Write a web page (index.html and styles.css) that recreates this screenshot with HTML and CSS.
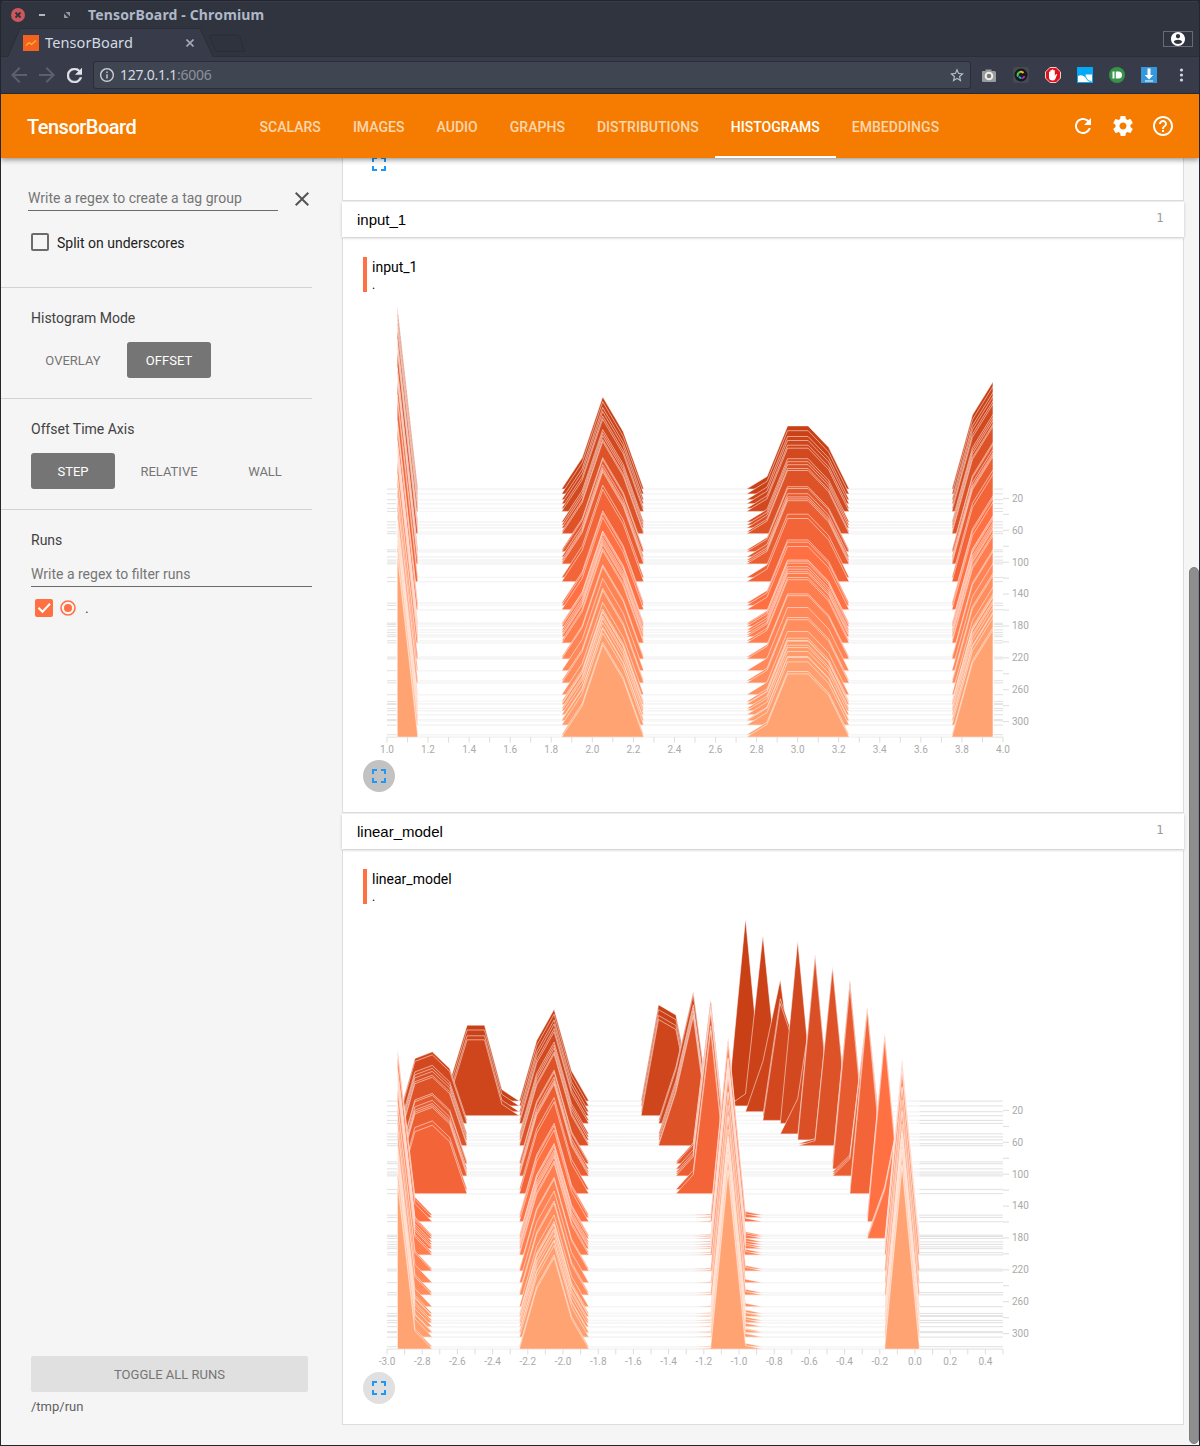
FILE: index.html
```html
<!DOCTYPE html>
<html lang="en">
<head>
<meta charset="utf-8">
<title>TensorBoard</title>
<link rel="stylesheet" href="styles.css">
</head>
<body>
<div class="window">
  <div class="titlebar">
    <svg class="win-buttons" width="62" height="16" viewBox="0 0 62 16">
      <circle cx="7" cy="8" r="7" fill="#cc575d"/>
      <path d="M4.500 5.500l5 5m0-5l-5 5" stroke="#2f343f" stroke-width="1.800"/>
      <path d="M28 8h6" stroke="#afb8c6" stroke-width="2"/>
      <path d="M54.500 5H59v4.500zM53 6.500V11h4.500z" fill="#8f97a5"/>
    </svg>
    <span class="win-title">TensorBoard - Chromium</span>
  </div>
  <div class="tabstrip">
    <svg class="tab-shape" width="250" height="29" viewBox="0 0 250 29">
      <path d="M0 28.500H7L19 .5H199L212 28.500H250V29H0z" fill="#383c4a"/>
      <path d="M0 28.500H7L19 .5H199L212 28.500H250" fill="none" stroke="#2b2e39"/>
      <path d="M210 7h26q2 0 3 2l4 13q1 1.500-1 1.500h-25q-2 0-3-2l-5-12q-1-2.500 1-2.500z" fill="#2f333e" stroke="#292d37"/>
    </svg>
    <div class="tab">
      <svg width="16" height="16" viewBox="0 0 16 16"><path d="M0 0h16v16H0z" fill="#f4631e"/><path d="M3 10.500l3-3 2.500 2 4.500-4" fill="none" stroke="#ffb23e" stroke-width="1.300"/></svg>
      <span class="tab-title">TensorBoard</span>
      <svg class="tab-close" width="8" height="8" viewBox="0 0 8 8"><path d="M.5.5l7 7m0-7l-7 7" stroke="#a4aab5" stroke-width="1.600"/></svg>
    </div>
    <div class="profile">
      <svg width="14" height="14" viewBox="2 2 20 20"><path fill="#fff" d="M12 2C6.480 2 2 6.480 2 12s4.480 10 10 10 10-4.480 10-10S17.520 2 12 2zm0 3c1.660 0 3 1.340 3 3s-1.340 3-3 3-3-1.340-3-3 1.340-3 3-3zm0 14.200c-2.500 0-4.710-1.280-6-3.220.03-1.990 4-3.080 6-3.080 1.990 0 5.970 1.090 6 3.080-1.290 1.940-3.500 3.220-6 3.220z"/></svg>
    </div>
  </div>
  <div class="toolbar">
    <svg class="nav-ico" width="16" height="16" viewBox="4 4 16 16"><path fill="#5b606e" d="M20 11H7.830l5.590-5.590L12 4l-8 8 8 8 1.410-1.410L7.830 13H20v-2z"/></svg>
    <svg class="nav-ico" width="16" height="16" viewBox="4 4 16 16"><path fill="#5b606e" d="M12 4l-1.410 1.410L16.170 11H4v2h12.170l-5.580 5.590L12 20l8-8z"/></svg>
    <svg class="nav-ico" width="15" height="15" viewBox="4 4 16 16"><path fill="#e3e5ea" stroke="#e3e5ea" stroke-width=".5" d="M17.650 6.350C16.200 4.900 14.210 4 12 4c-4.420 0-7.990 3.580-7.990 8s3.570 8 7.990 8c3.730 0 6.840-2.550 7.730-6h-2.080c-.82 2.330-3.040 4-5.650 4-3.310 0-6-2.690-6-6s2.690-6 6-6c1.660 0 3.140.69 4.220 1.780L13 11h7V4l-2.350 2.350z"/></svg>
    <div class="omnibox">
      <svg width="14" height="14" viewBox="2 2 20 20"><path fill="#c9cdd6" d="M11 17h2v-6h-2v6zm1-15C6.480 2 2 6.480 2 12s4.480 10 10 10 10-4.480 10-10S17.520 2 12 2zm0 18c-4.410 0-8-3.590-8-8s3.590-8 8-8 8 3.590 8 8-3.590 8-8 8zM11 9h2V7h-2v2z"/></svg>
      <span class="url">127.0.1.1<span class="port">:6006</span></span>
      <svg class="star" width="14" height="14" viewBox="2 2 20 19"><path fill="#b9bec9" d="M22 9.240l-7.190-.62L12 2 9.190 8.630 2 9.240l5.460 4.730L5.820 21 12 17.270 18.180 21l-1.630-7.030L22 9.240zM12 15.400l-3.760 2.270 1-4.280-3.320-2.880 4.380-.38L12 6.100l1.710 4.040 4.380.38-3.320 2.880 1 4.280L12 15.400z"/></svg>
    </div>
    <div class="extensions">
      <svg width="16" height="16" viewBox="0 0 16 16"><path fill="#999b9c" d="M1.500 4h3V2.500h6V4h3q1.500 0 1.500 1.500V14q0 1-1 1H2q-1 0-1-1V5q0-1 .5-1z"/><circle cx="8" cy="9" r="3.300" fill="#777" stroke="#eee" stroke-width="2"/></svg>
      <svg width="16" height="16" viewBox="0 0 16 16"><rect width="16" height="16" rx="3" fill="#464a52"/><circle cx="8" cy="8" r="6.500" fill="#17191d"/><path d="M5 9.500A3.200 3.200 0 0 1 7 5" fill="none" stroke="#4bc934" stroke-width="2"/><path d="M7 5a3.200 3.200 0 0 1 3.500 1" fill="none" stroke="#efba2e" stroke-width="2"/><path d="M11.500 9a3.500 3.500 0 0 1-2.500 2.500" fill="none" stroke="#c0308c" stroke-width="1.800"/><path d="M6 9.500q1 1.800 2.500 1.500" fill="none" stroke="#289bef" stroke-width="2"/></svg>
      <svg width="16" height="16" viewBox="0 0 16 16"><path d="M4.900.5h6.200l4.400 4.400v6.200l-4.400 4.400H4.900L.5 11.100V4.900z" fill="#e2121c" stroke="#eecccc"/><path d="M4 8V5q.8-1 1.300 0V3.500q.8-1 1.500 0V2.800q.8-.9 1.500 0v.7q.9-.8 1.500 0V9l1.200-2q1.200-.4 1 .7L10.300 12q-.6 1.500-2.500 1.500Q4 13.500 4 10z" fill="#fff"/></svg>
      <svg width="16" height="16" viewBox="0 0 16 16"><path d="M0 0h16v16H0z" fill="#03a9f4"/><path d="M1 9q3-1.500 5.500 0L8 10l.5-2.500H15V15H1z" fill="#fff"/><path d="M8.500 8.500q0 2 1.500 4t4.500 2" stroke="#03a9f4" fill="none"/></svg>
      <svg width="16" height="16" viewBox="0 0 16 16"><circle cx="8" cy="8" r="8" fill="#359447"/><path d="M3.500 4.500h2v7h-2zM6.800 4.500h2.700a3.500 3.500 0 0 1 0 7H6.800z" fill="#fff"/></svg>
      <svg width="16" height="16" viewBox="0 0 16 16"><path d="M0 0h16v16H0z" fill="#3498db"/><path d="M6.500 1.500h3V8h2.800L8 12.500 3.700 8h2.800zM4 13.500h8v1H4z" fill="#fff"/></svg>
      <svg width="16" height="16" viewBox="0 0 16 16"><g fill="#d3d7df"><circle cx="8.500" cy="3" r="1.600"/><circle cx="8.500" cy="8" r="1.600"/><circle cx="8.500" cy="13" r="1.600"/></g></svg>
    </div>
  </div>

  <header class="appbar">
    <h1>TensorBoard</h1>
    <nav>
      <a>SCALARS</a><a>IMAGES</a><a>AUDIO</a><a>GRAPHS</a><a>DISTRIBUTIONS</a><a class="active">HISTOGRAMS</a><a>EMBEDDINGS</a>
    </nav>
    <div class="actions">
      <svg width="24" height="24" viewBox="0 0 24 24"><path d="M17.650 6.350C16.200 4.900 14.210 4 12 4c-4.420 0-7.990 3.580-7.990 8s3.570 8 7.990 8c3.730 0 6.840-2.550 7.730-6h-2.080c-.82 2.330-3.040 4-5.650 4-3.310 0-6-2.690-6-6s2.690-6 6-6c1.660 0 3.140.69 4.220 1.780L13 11h7V4l-2.350 2.350z"/></svg>
      <svg width="24" height="24" viewBox="0 0 24 24"><path d="M19.430 12.980c.04-.32.07-.64.07-.98s-.03-.66-.07-.98l2.110-1.650c.19-.15.24-.42.12-.64l-2-3.460c-.12-.22-.39-.3-.61-.22l-2.490 1c-.52-.4-1.080-.73-1.690-.98l-.38-2.650C14.460 2.180 14.250 2 14 2h-4c-.25 0-.46.18-.49.42l-.38 2.650c-.61.25-1.170.59-1.690.98l-2.490-1c-.23-.09-.49 0-.61.22l-2 3.460c-.13.22-.07.49.12.64l2.110 1.650c-.04.32-.07.65-.07.98s.03.66.07.98l-2.110 1.650c-.19.15-.24.42-.12.64l2 3.460c.12.22.39.3.61.22l2.490-1c.52.4 1.080.73 1.690.98l.38 2.650c.03.24.24.42.49.42h4c.25 0 .46-.18.49-.42l.38-2.650c.61-.25 1.170-.59 1.690-.98l2.490 1c.23.09.49 0 .61-.22l2-3.460c.12-.22.07-.49-.12-.64l-2.110-1.650zM12 15.500c-1.930 0-3.500-1.570-3.500-3.500s1.570-3.500 3.500-3.500 3.500 1.570 3.500 3.500-1.570 3.500-3.500 3.500z"/></svg>
      <svg width="24" height="24" viewBox="0 0 24 24"><path d="M11 18h2v-2h-2v2zm1-16C6.480 2 2 6.480 2 12s4.480 10 10 10 10-4.480 10-10S17.520 2 12 2zm0 18c-4.410 0-8-3.590-8-8s3.590-8 8-8 8 3.590 8 8-3.590 8-8 8zm0-14c-2.210 0-4 1.790-4 4h2c0-1.100.9-2 2-2s2 .9 2 2c0 2-3 1.750-3 5h2c0-2.250 3-2.500 3-5 0-2.210-1.790-4-4-4z"/></svg>
    </div>
  </header>

  <div class="content">
    <aside>
      <section class="tag-group">
        <div class="field-row">
          <div class="field">Write a regex to create a tag group</div>
          <svg width="24" height="24" viewBox="0 0 24 24"><path fill="#555" d="M19 6.410L17.590 5 12 10.590 6.410 5 5 6.410 10.590 12 5 17.590 6.410 19 12 13.410 17.590 19 19 17.590 13.410 12z"/></svg>
        </div>
        <div class="check-row"><span class="checkbox"></span><span class="check-label">Split on underscores</span></div>
      </section>
      <section class="option">
        <h2>Histogram Mode</h2>
        <div class="buttons"><span class="btn">OVERLAY</span><span class="btn on">OFFSET</span></div>
      </section>
      <section class="option">
        <h2>Offset Time Axis</h2>
        <div class="buttons"><span class="btn on">STEP</span><span class="btn">RELATIVE</span><span class="btn">WALL</span></div>
      </section>
      <section class="runs">
        <h2>Runs</h2>
        <div class="field">Write a regex to filter runs</div>
        <div class="run-row">
          <svg width="18" height="18" viewBox="0 0 18 18"><rect width="18" height="18" rx="2" fill="#ff7043"/><path d="M3.500 8.800l4 4 7.500-8" fill="none" stroke="#fff" stroke-width="2"/></svg>
          <svg width="16" height="16" viewBox="0 0 16 16"><circle cx="8" cy="8" r="7" fill="none" stroke="#ff7043" stroke-width="1.600"/><circle cx="8" cy="8" r="4" fill="#ff7043"/></svg>
          <span>.</span>
        </div>
      </section>
      <div class="toggle">TOGGLE ALL RUNS</div>
      <div class="logdir">/tmp/run</div>
    </aside>
    <main>
      <div class="panel clipped">
        <svg class="expand-ico" width="24" height="24" viewBox="0 0 24 24"><path d="M7 14H5v5h5v-2H7v-3zm-2-4h2V7h3V5H5v5zm12 7h-3v2h5v-5h-2v3zM14 5v2h3v3h2V5h-5z"/></svg>
      </div>
      <div class="panel-head"><span>input_1</span><span class="count">1</span></div>
      <div class="panel">
        <div class="chart-title">input_1<small>.</small></div>
        <svg class="chart" id="input" width="700" height="460" viewBox="363 300 700 460"></svg>
        <div class="expand pressed"><svg class="expand-ico" width="24" height="24" viewBox="0 0 24 24"><path d="M7 14H5v5h5v-2H7v-3zm-2-4h2V7h3V5H5v5zm12 7h-3v2h5v-5h-2v3zM14 5v2h3v3h2V5h-5z"/></svg></div>
      </div>
      <div class="panel-head"><span>linear_model</span><span class="count">1</span></div>
      <div class="panel">
        <div class="chart-title">linear_model<small>.</small></div>
        <svg class="chart" id="linear" width="700" height="460" viewBox="363 300 700 460"></svg>
        <div class="expand"><svg class="expand-ico" width="24" height="24" viewBox="0 0 24 24"><path d="M7 14H5v5h5v-2H7v-3zm-2-4h2V7h3V5H5v5zm12 7h-3v2h5v-5h-2v3zM14 5v2h3v3h2V5h-5z"/></svg></div>
      </div>
    </main>
    <div class="scrollbar"><div class="thumb"></div></div>
  </div>
</div>
<script src="charts.js"></script>
</body>
</html>
```
FILE: styles.css
```css
* { box-sizing: border-box; }
body { margin: 0; font-family: Roboto, "Liberation Sans", sans-serif; background: #23262f; }
svg { display: block; flex: none; }
.window { width: 1200px; height: 1446px; border: 1px solid #23262f; border-radius: 4px 4px 0 0; overflow: hidden; display: flex; flex-direction: column; background: #2f343f; }

.titlebar { height: 27px; flex: none; display: flex; align-items: center; padding-left: 10px; border-top: 1px solid #383c4a; }
.win-title { margin-left: 15px; padding-bottom: 2px; font: bold 14px "Noto Sans", sans-serif; color: #afb8c6; letter-spacing: .15px; white-space: nowrap; }
.tabstrip { height: 29px; flex: none; display: grid; border-bottom: 1px solid #2b2e39; }
.tabstrip > * { grid-area: 1 / 1; }
.tab { display: flex; align-items: center; padding-left: 22px; width: 200px; color: #d3dae3; font: 14.5px "Noto Sans", sans-serif; }
.tab-title { margin-left: 6px; padding-bottom: 2px; letter-spacing: .1px; }
.tab-close { margin-left: auto; margin-right: 7px; }
.profile { justify-self: end; margin: 3px 6px 0 0; width: 30px; height: 16px; border: 1px solid #666b77; display: flex; align-items: center; justify-content: center; }
.toolbar { height: 37px; flex: none; background: #383c4a; display: flex; align-items: center; padding-left: 10px; border-bottom: 1px solid #2b2e39; }
.nav-ico { margin-right: 12px; }
.nav-ico:nth-child(3) { margin-right: 13px; }
.omnibox { width: 878px; height: 28px; margin-left: -2px; background: #404552; border: 1px solid #2b2e39; border-radius: 3px; display: flex; align-items: center; padding: 0 6px; }
.url { margin-left: 6px; padding-bottom: 2px; font: 14px "Noto Sans", sans-serif; letter-spacing: -.25px; color: #d3dae3; }
.port { color: #8c929d; }
.star { margin-left: auto; }
.extensions { display: flex; gap: 16px; margin-left: 10px; }

.appbar { height: 64px; flex: none; background: #f57c00; color: #fff; display: flex; align-items: center; padding-left: 26px; position: relative; z-index: 2; box-shadow: 0 2px 5px rgba(0,0,0,.4); }
.appbar h1 { margin: 0; padding-top: 2px; width: 216.5px; font-size: 20px; font-weight: 500; letter-spacing: -.5px; }
nav { display: flex; height: 64px; }
nav a { padding: 2px 16px 0; line-height: 62px; font-size: 14px; font-weight: 500; letter-spacing: .03px; color: rgba(255,255,255,.7); }
nav a.active { color: #fff; border-bottom: 2px solid #fff; }
.actions { margin-left: auto; margin-right: 24px; display: flex; gap: 16px; fill: #fff; }

.content { flex: 1; min-height: 0; display: flex; background: #f5f5f5; }
aside { width: 311px; display: flex; flex-direction: column; color: #3c3c3c; font-size: 14px; }
aside section { border-bottom: 1px solid #d2d2d2; }
.field { color: #757575; border-bottom: 1px solid #6b6b6b; height: 24px; line-height: 22px; white-space: nowrap; }
.tag-group { height: 130px; padding: 29px 0 0 27px; }
.field-row { display: flex; gap: 12px; }
.field-row .field { width: 250px; flex: none; }
.check-row { display: flex; align-items: center; margin: 22px 0 0 3px; color: #212121; }
.check-label { padding-top: 2px; }
.checkbox { width: 18px; height: 18px; border: 2px solid #6b6b6b; border-radius: 2px; margin-right: 8px; }
.option { height: 111px; padding: 22px 0 0 30px; }
h2 { margin: 0; font-size: 14px; font-weight: 400; line-height: 16px; color: #424242; }
.buttons { display: flex; gap: 12px; margin-top: 16px; }
.btn { width: 84px; height: 36px; line-height: 37px; text-align: center; font-size: 13px; color: #757575; border-radius: 3px; }
.btn.on { background: #757575; color: #fff; }
aside .runs { padding: 22px 0 0 30px; border: 0; }
.runs .field { margin-top: 15px; }
.run-row { display: flex; align-items: center; margin: 12px 0 0 4px; }
.run-row svg + svg { margin: 0 9px 0 7px; }
.toggle { margin: auto 4px 0 30px; height: 36px; line-height: 37px; background: #e0e0e0; border-radius: 2px; text-align: center; font-size: 13px; color: #757575; }
.logdir { margin: 7px 0 30px 30px; font-size: 13px; line-height: 16px; color: #616161; }

main { width: 842px; margin-left: 30px; }
.panel { height: 575px; background: #fff; border: 1px solid #ddd; border-top: 0; padding: 19px 0 0 20px; }
.panel.clipped { display: flow-root; height: 43px; padding: 0 0 0 24px; }
.panel-head { height: 35px; margin: 1px 0; background: #fff; display: flex; justify-content: space-between; padding: 0 20px 0 15px; font: 15px/35px "Liberation Sans", sans-serif; color: #000; box-shadow: 0 1px 3px rgba(0,0,0,.2); position: relative; }
.count { font: 12px/33px "DejaVu Sans", sans-serif; color: #999; }
.chart-title { height: 35px; border-left: 4px solid #ff7043; padding-left: 5px; font-size: 14px; line-height: 20px; color: #000; }
.chart-title small { display: block; font-size: 12px; line-height: 17px; }
.chart { margin-top: 8px; font-size: 10px; }
.grid { stroke: #e0e0e0; }
.tick { stroke: #ddd; }
.label { fill: #aaa; }
.slice { stroke: #fff; stroke-opacity: .5; stroke-width: 1; }
.expand { width: 32px; height: 32px; border-radius: 50%; background: #e0e0e0; display: flex; align-items: center; justify-content: center; }
.expand.pressed { background: #c2c2c2; }
.expand-ico { fill: #2196f3; }
.clipped .expand-ico { margin-top: -6px; }

.scrollbar { margin-left: auto; width: 10px; padding-top: 409px; }
.thumb { width: 10px; height: 877px; border-radius: 5px; background: #8e8e8e; border: 1px solid #808080; }
```
FILE: charts.js
```js
const NS = "http://www.w3.org/2000/svg";
const LEFT = 387, RIGHT = 1003, BOTTOM = 737, TOP = 482.5;

// Vertical offset of every recorded step.
const rows = [488.700, 493.5, 499.3, 503.3, 508, 511, 521.5, 524.5, 527.5, 531.3, 533.3,
  549.5, 551.3, 556.5, 559.7, 561.7, 563.5, 577, 581.3, 602.7, 605, 609.3, 622.8, 624,
  626, 629.5, 632, 634.5, 636.3, 640.3, 642.5, 656.7, 658.5, 670.3, 680.3, 682.5, 694.3,
  701, 703.3, 704, 708, 710.3, 714.3, 719.3, 720.3, 724.7, 734.3, 736.7].map(y => y + .4);

function mix(a, b, t) {
  return "rgb(" + a.map((v, i) => Math.round(v + (b[i] - v) * t)).join(",") + ")";
}
function color(y) {
  const dark = [198, 61, 20], mid = [255, 112, 67], light = [255, 163, 114];
  return y < 609 ? mix(dark, mid, (y - TOP) / (609 - TOP)) : mix(mid, light, (y - 609) / (BOTTOM - 609));
}
function add(svg, name, attrs, text) {
  const el = document.createElementNS(NS, name);
  for (const k in attrs) el.setAttribute(k, attrs[k]);
  if (text !== undefined) el.textContent = text;
  svg.appendChild(el);
}

function draw(id, x0, dx, bins, values, min, ticks) {
  const svg = document.getElementById(id);
  rows.forEach(y => add(svg, "line", { class: "grid", x1: LEFT, x2: RIGHT, y1: y, y2: y }));
  rows.forEach((y, i) => {
    const v = values(i);
    let d = `M${x0} ${y}`;
    for (let b = 0; b < bins; b++) d += `L${(x0 + b * dx).toFixed(2)} ${(y - (v[b] || 0) * 1.008).toFixed(2)}`;
    d += `L${x0 + (bins - 1) * dx} ${y}Z`;
    add(svg, "path", { class: "slice", d, fill: color(y) });
  });
  for (let k = 0; k <= ticks; k++) {
    const x = LEFT + (RIGHT - LEFT) * k / ticks;
    add(svg, "line", { class: "tick", x1: x, x2: x, y1: BOTTOM, y2: BOTTOM + 5.5 });
    if (k % 2 === 0) {
      const n = (Math.round(min * 10) + k) / 10;
      add(svg, "text", { class: "label", x, y: 753, "text-anchor": "middle" }, n.toFixed(1));
    }
  }
  for (let s = 20; s <= 300; s += 20) {
    const y = TOP + s * .797;
    add(svg, "line", { class: "tick", x1: RIGHT, x2: RIGHT + 6, y1: y, y2: y });
    if (s % 40 === 20) add(svg, "text", { class: "label", x: 1012, y: y + 3.3 }, s);
  }
}

draw("input", 397.3, 20.54, 30, () => ({
  0: 181, 9: 31, 10: 91.5, 11: 57, 18: 12.5, 19: 62.7, 20: 62.7, 21: 41.5, 28: 73.5, 29: 106.5
}), 1, 30);

function linearModel(i) {
  const v = { 8: 60, 9: 91, 10: 30 };
  const set = o => Object.assign(v, o);
  if (i < 4) set({ 3: 19, 4: 75.3, 5: 75.3, 6: 11.4 });
  else if (i < 19) set({ 1: 61.5, 2: 68, 3: 51.5 });
  else set({ 0: 165, 1: 18 });

  if (i < 4) set({ 15: 95.5, 16: 85.5 });
  else if (i < 11) set({ 16: 53, 17: 128 });
  else if (i < 19) set({ 17: 19, 18: 162 });
  else set({ 18: 1, 19: 176, 20: 3.5 });

  if (i === 0) set({ 20: 181 });
  else if (i === 1) set({ 20: 12, 21: 169 });
  else if (i === 2) set({ 21: 50, 22: 131 });
  else if (i < 5) set({ 22: 116, 23: 65 });
  else if (i === 5) set({ 23: 181 });
  else if (i === 6) set({ 23: 35, 24: 146 });
  else if (i < 9) set({ 24: 181 });
  else if (i < 11) set({ 24: 5, 25: 176 });
  else if (i < 14) set({ 26: 181 });
  else if (i < 17) set({ 26: 17, 27: 164 });
  else if (i < 19) set({ 27: 181 });
  else if (i < 22) set({ 28: 181 });
  else if (i < 25) set({ 28: 48, 29: 133 });
  else set({ 29: 181 });
  return v;
}
draw("linear", 397.5, 17.4, 31, linearModel, -3, 35);
```
